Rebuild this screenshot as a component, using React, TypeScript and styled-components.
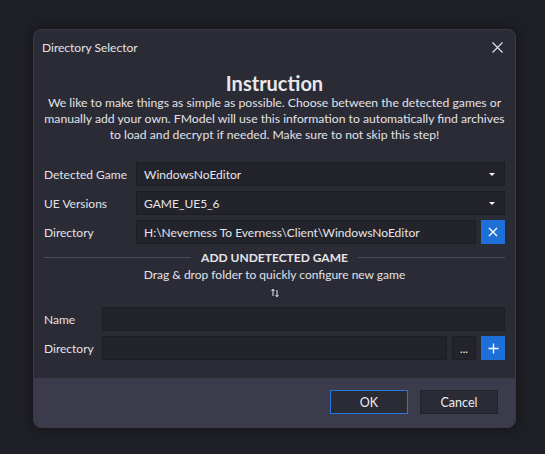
import React from 'react'
import styled, { createGlobalStyle } from 'styled-components'

const GlobalStyle = createGlobalStyle`
  html, body {
    margin: 0;
    padding: 0;
    background: #1f1f27;
  }
  body {
    font-family: Lato, 'Noto Sans', sans-serif;
    font-size: 12px;
    color: #e2e2e6;
  }
`

const Screen = styled.div`
  width: 545px;
  height: 454px;
  box-sizing: border-box;
  padding: 29px 0 0 33px;
`

const Window = styled.div`
  width: 483px;
  box-sizing: border-box;
  background: #2b2b36;
  border: 1px solid #3a3a46;
  border-radius: 8px;
  box-shadow: 0 0 14px rgba(0, 0, 0, 0.45);
  overflow: hidden;
  display: flex;
  flex-direction: column;
`

const TitleBar = styled.div`
  height: 35px;
  display: flex;
  align-items: center;
  justify-content: space-between;
  padding: 0 12px 0 8px;
  font-size: 12px;
  color: #e4e4e8;
`

const CloseGlyph = styled.svg`
  width: 11px;
  height: 11px;
`

const Body = styled.div`
  padding: 6px 10px 18px 10px;
  display: flex;
  flex-direction: column;
`

const Heading = styled.div`
  font-size: 20px;
  line-height: 24px;
  font-weight: 700;
  text-align: center;
  color: #e8e8ec;
`

const Blurb = styled.div`
  font-size: 12.2px;
  line-height: 16px;
  text-align: center;
  color: #e2e2e6;
  white-space: nowrap;
  margin-bottom: 19px;
`

const Form = styled.div<{ $label: number }>`
  display: grid;
  grid-template-columns: ${({ $label }) => $label}px 1fr;
  row-gap: 5px;
  align-items: center;
`

const Label = styled.div`
  font-size: 12px;
  color: #e2e2e6;
`

const Line = styled.div`
  display: flex;
  gap: 5px;
`

const Field = styled.div`
  flex: 1;
  height: 24px;
  box-sizing: border-box;
  background: #23232c;
  border: 1px solid #1d1d24;
  display: flex;
  align-items: center;
  justify-content: space-between;
  padding: 0 8px 0 7px;
  font-size: 12px;
  color: #e6e6ea;
`

const Caret = styled.span`
  width: 0;
  height: 0;
  border-left: 3.5px solid transparent;
  border-right: 3.5px solid transparent;
  border-top: 3.5px solid #f0f0f0;
  margin-right: 1px;
`

const SquareButton = styled.div<{ $accent?: boolean }>`
  width: 24px;
  height: 24px;
  box-sizing: border-box;
  display: flex;
  align-items: center;
  justify-content: center;
  background: ${({ $accent }) => ($accent ? '#1f6fd8' : '#23232c')};
  border: 1px solid ${({ $accent }) => ($accent ? '#1f6fd8' : '#1d1d24')};
  color: #fff;
  font-size: 11px;
`

const Divider = styled.div`
  display: flex;
  align-items: center;
  gap: 10px;
  height: 16px;
  margin-top: 5px;
  font-size: 12px;
  font-weight: 700;
  color: #e6e6ea;
  &::before,
  &::after {
    content: '';
    flex: 1;
    height: 1px;
    background: #4a4a58;
  }
`

const DropHint = styled.div`
  margin-top: 2px;
  text-align: center;
  font-size: 12px;
  line-height: 16px;
  color: #e2e2e6;
`

const DropIcon = styled.div`
  display: flex;
  justify-content: center;
  height: 20px;
  align-items: center;
  margin-bottom: 4px;
`

const Footer = styled.div`
  background: #3b3b4b;
  display: flex;
  justify-content: flex-end;
  gap: 12px;
  padding: 12px 17px 13px 0;
`

const DialogButton = styled.div<{ $primary?: boolean }>`
  width: 78px;
  height: 24px;
  box-sizing: border-box;
  display: flex;
  align-items: center;
  justify-content: center;
  background: #2b2b36;
  border: 1px solid ${({ $primary }) => ($primary ? '#2a74de' : '#23232b')};
  font-size: 12.5px;
  color: #ececf0;
`

const Cross = () => (
  <svg width="10" height="10" viewBox="0 0 10 10">
    <path d="M1 1L9 9M9 1L1 9" stroke="#fff" strokeWidth="1.3" />
  </svg>
)

const Plus = () => (
  <svg width="11" height="11" viewBox="0 0 11 11">
    <path d="M5.5 0.5V10.5M0.5 5.5H10.5" stroke="#fff" strokeWidth="1.4" />
  </svg>
)

const SwapArrows = () => (
  <svg width="8" height="10" viewBox="0 0 8 10">
    <path d="M2 8V1.5M0.5 3L2 1.2L3.5 3" stroke="#e8e8ec" strokeWidth="1" fill="none" />
    <path d="M6 2V8.5M4.5 7L6 8.8L7.5 7" stroke="#e8e8ec" strokeWidth="1" fill="none" />
  </svg>
)

const App: React.FC = () => {
  return (
    <Screen>
      <GlobalStyle />
      <Window>
        <TitleBar>
          <span>Directory Selector</span>
          <CloseGlyph viewBox="0 0 11 11">
            <path d="M0.5 0.5L10.5 10.5M10.5 0.5L0.5 10.5" stroke="#e4e4e8" strokeWidth="1.1" />
          </CloseGlyph>
        </TitleBar>
        <Body>
          <Heading>Instruction</Heading>
          <Blurb>
            We like to make things as simple as possible. Choose between the detected games or
            <br />
            manually add your own. FModel will use this information to automatically find archives
            <br />
            to load and decrypt if needed. Make sure to not skip this step!
          </Blurb>

          <Form $label={92}>
            <Label>Detected Game</Label>
            <Field>
              WindowsNoEditor
              <Caret />
            </Field>
            <Label>UE Versions</Label>
            <Field>
              GAME_UE5_6
              <Caret />
            </Field>
            <Label>Directory</Label>
            <Line>
              <Field>H:\Neverness To Everness\Client\WindowsNoEditor</Field>
              <SquareButton $accent>
                <Cross />
              </SquareButton>
            </Line>
          </Form>

          <Divider>ADD UNDETECTED GAME</Divider>
          <DropHint>Drag &amp; drop folder to quickly configure new game</DropHint>
          <DropIcon>
            <SwapArrows />
          </DropIcon>

          <Form $label={58}>
            <Label>Name</Label>
            <Field />
            <Label>Directory</Label>
            <Line>
              <Field />
              <SquareButton>...</SquareButton>
              <SquareButton $accent>
                <Plus />
              </SquareButton>
            </Line>
          </Form>
        </Body>
        <Footer>
          <DialogButton $primary>OK</DialogButton>
          <DialogButton>Cancel</DialogButton>
        </Footer>
      </Window>
    </Screen>
  )
}

export default App
